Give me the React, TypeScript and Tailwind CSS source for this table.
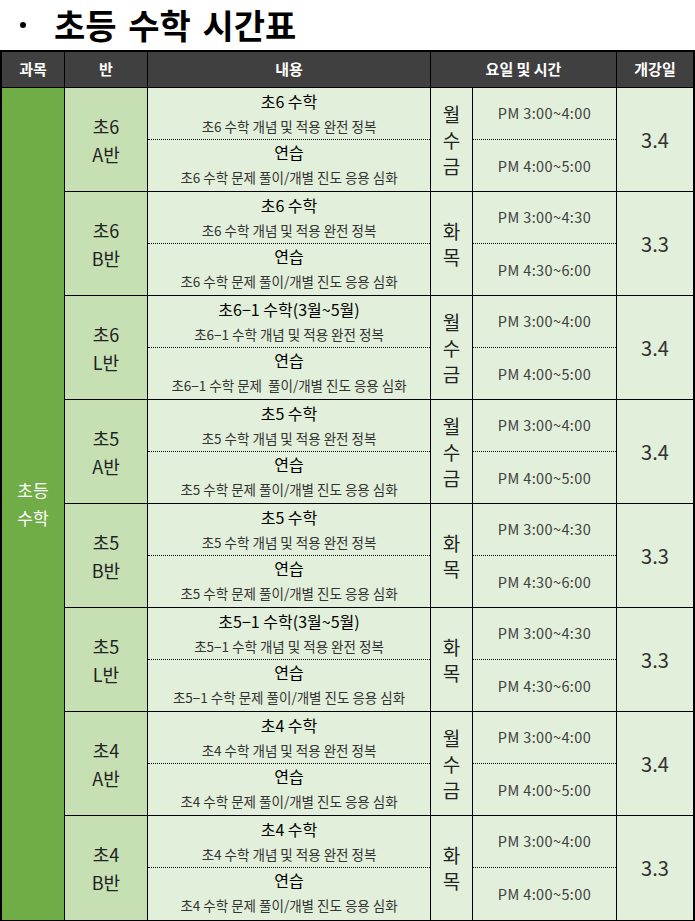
import React from 'react';

type Group = {
  grade: string;
  cls: string;
  title: string;
  desc: string;
  practice: string;
  days: string[];
  times: [string, string];
  start: string;
};

const groups: Group[] = [
  {
    grade: '초6',
    cls: 'A반',
    title: '초6 수학',
    desc: '초6 수학 개념 및 적용 완전 정복',
    practice: '초6 수학 문제 풀이/개별 진도 응용 심화',
    days: ['월', '수', '금'],
    times: ['PM 3:00~4:00', 'PM 4:00~5:00'],
    start: '3.4'
  },
  {
    grade: '초6',
    cls: 'B반',
    title: '초6 수학',
    desc: '초6 수학 개념 및 적용 완전 정복',
    practice: '초6 수학 문제 풀이/개별 진도 응용 심화',
    days: ['화', '목'],
    times: ['PM 3:00~4:30', 'PM 4:30~6:00'],
    start: '3.3'
  },
  {
    grade: '초6',
    cls: 'L반',
    title: '초6−1 수학(3월~5월)',
    desc: '초6−1 수학 개념 및 적용 완전 정복',
    practice: '초6−1 수학 문제  풀이/개별 진도 응용 심화',
    days: ['월', '수', '금'],
    times: ['PM 3:00~4:00', 'PM 4:00~5:00'],
    start: '3.4'
  },
  {
    grade: '초5',
    cls: 'A반',
    title: '초5 수학',
    desc: '초5 수학 개념 및 적용 완전 정복',
    practice: '초5 수학 문제 풀이/개별 진도 응용 심화',
    days: ['월', '수', '금'],
    times: ['PM 3:00~4:00', 'PM 4:00~5:00'],
    start: '3.4'
  },
  {
    grade: '초5',
    cls: 'B반',
    title: '초5 수학',
    desc: '초5 수학 개념 및 적용 완전 정복',
    practice: '초5 수학 문제 풀이/개별 진도 응용 심화',
    days: ['화', '목'],
    times: ['PM 3:00~4:30', 'PM 4:30~6:00'],
    start: '3.3'
  },
  {
    grade: '초5',
    cls: 'L반',
    title: '초5−1 수학(3월~5월)',
    desc: '초5−1 수학 개념 및 적용 완전 정복',
    practice: '초5−1 수학 문제 풀이/개별 진도 응용 심화',
    days: ['화', '목'],
    times: ['PM 3:00~4:30', 'PM 4:30~6:00'],
    start: '3.3'
  },
  {
    grade: '초4',
    cls: 'A반',
    title: '초4 수학',
    desc: '초4 수학 개념 및 적용 완전 정복',
    practice: '초4 수학 문제 풀이/개별 진도 응용 심화',
    days: ['월', '수', '금'],
    times: ['PM 3:00~4:00', 'PM 4:00~5:00'],
    start: '3.4'
  },
  {
    grade: '초4',
    cls: 'B반',
    title: '초4 수학',
    desc: '초4 수학 개념 및 적용 완전 정복',
    practice: '초4 수학 문제 풀이/개별 진도 응용 심화',
    days: ['화', '목'],
    times: ['PM 3:00~4:00', 'PM 4:00~5:00'],
    start: '3.3'
  }
];

const Row: React.FC<{ g: Group; last: boolean }> = ({ g, last }) => {
  return (
    <div className={`flex h-[104px] ${last ? '' : 'border-b border-black'}`}>
      {/* 반 */}
      <div className="w-[83px] border-r border-black bg-[#c6e0b4] flex flex-col items-center justify-center text-[18px] leading-[28px] text-[#222]">
        <span>{g.grade}</span>
        <span>{g.cls}</span>
      </div>

      {/* 내용 */}
      <div className="w-[283px] border-r border-black flex flex-col">
        <div className="h-[52px] border-b border-dotted border-black flex flex-col items-center">
          <span className="text-[16px] leading-[26px] text-black">{g.title}</span>
          <span className="text-[13.5px] leading-[25px] text-[#333] whitespace-pre">{g.desc}</span>
        </div>
        <div className="flex-1 flex flex-col items-center">
          <span className="text-[16px] leading-[24px] text-black">연습</span>
          <span className="text-[13.5px] leading-[27px] text-[#333] whitespace-pre">{g.practice}</span>
        </div>
      </div>

      {/* 요일 */}
      <div className="w-[42px] border-r border-black flex flex-col items-center justify-center text-[19px] leading-[26px] text-[#222]">
        {g.days.map((d) => (
          <span key={d}>{d}</span>
        ))}
      </div>

      {/* 시간 */}
      <div className="w-[144px] border-r border-black flex flex-col text-[14.5px] text-[#404040] tracking-[0.4px]">
        <div className="h-[52px] border-b border-dotted border-black flex items-center justify-center pb-[2px]">
          {g.times[0]}
        </div>
        <div className="flex-1 flex items-center justify-center">{g.times[1]}</div>
      </div>

      {/* 개강일 */}
      <div className="flex-1 flex items-center justify-center text-[20px] text-[#333]">{g.start}</div>
    </div>
  );
};

const App: React.FC = () => {
  return (
    <div className="w-[695px] bg-white font-['Noto_Sans_CJK_KR',sans-serif]">
      <div className="h-[50px] flex items-center pl-[18px]">
        <span className="w-[10px] h-[6px] flex items-center justify-center mr-[26px]">
          <span className="block w-[6px] h-[6px] rounded-full bg-black" />
        </span>
        <h1 className="text-[34px] font-bold leading-[44px] text-black [word-spacing:4px]">초등 수학 시간표</h1>
      </div>

      <div className="border-2 border-black bg-[#e2efda]">
        {/* header */}
        <div className="flex h-[36px] bg-[#404040] border-b border-black text-white font-bold text-[15px]">
          <div className="w-[63px] border-r border-black flex items-center justify-center">과목</div>
          <div className="w-[83px] border-r border-black flex items-center justify-center">반</div>
          <div className="w-[283px] border-r border-black flex items-center justify-center">내용</div>
          <div className="w-[186px] border-r border-black flex items-center justify-center">요일 및 시간</div>
          <div className="flex-1 flex items-center justify-center">개강일</div>
        </div>

        {/* body */}
        <div className="flex">
          <div className="w-[63px] border-r border-black bg-[#70ad47] flex flex-col items-center justify-center text-white text-[17px] leading-[28px]">
            <span>초등</span>
            <span>수학</span>
          </div>
          <div className="flex-1 flex flex-col">
            {groups.map((g, i) => (
              <Row key={i} g={g} last={i === groups.length - 1} />
            ))}
          </div>
        </div>
      </div>
    </div>
  );
};

export default App;
